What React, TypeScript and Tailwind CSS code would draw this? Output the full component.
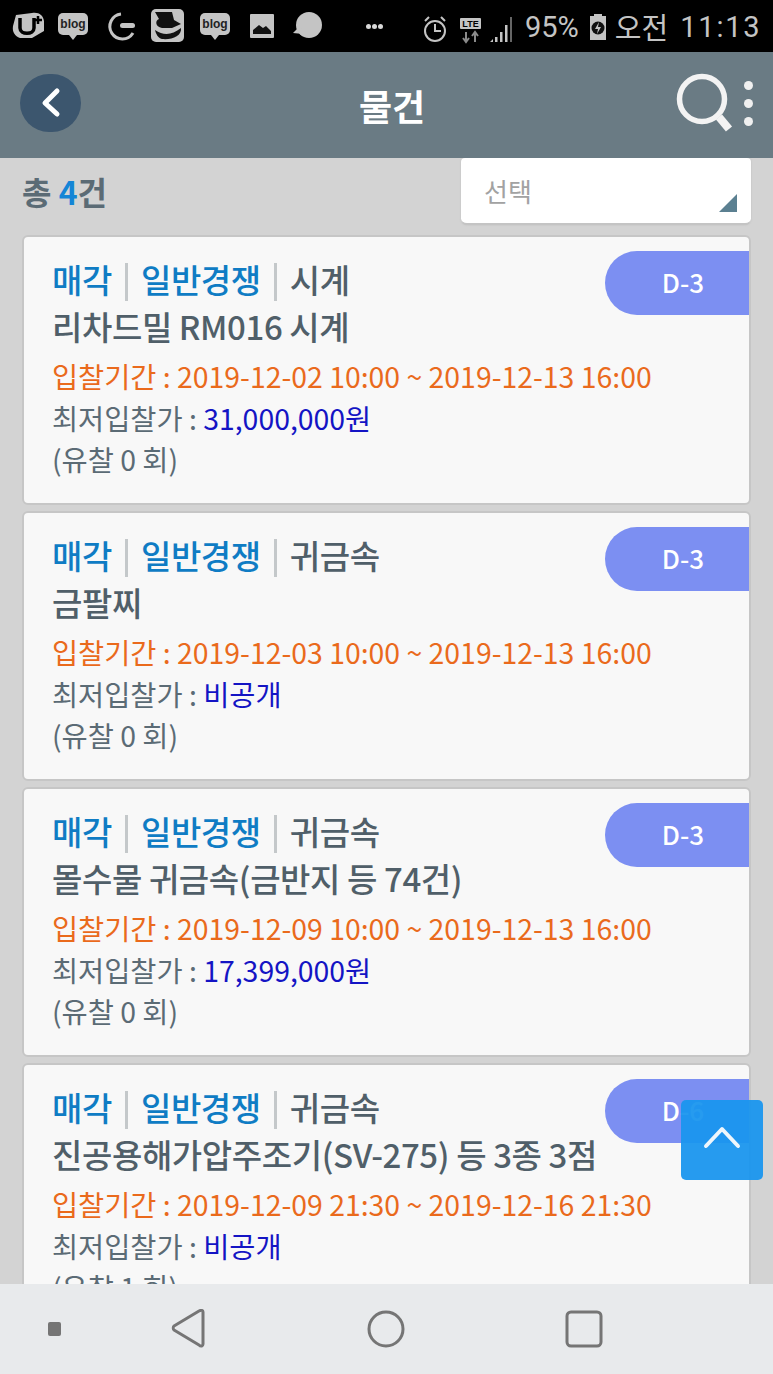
type Item = {
  category: string;
  title: string;
  period: string;
  price: string;
  fails: number;
  dday: string;
};

const items: Item[] = [
  { category: "시계", title: "리차드밀 RM016 시계", period: "2019-12-02 10:00 ~ 2019-12-13 16:00", price: "31,000,000원", fails: 0, dday: "D-3" },
  { category: "귀금속", title: "금팔찌", period: "2019-12-03 10:00 ~ 2019-12-13 16:00", price: "비공개", fails: 0, dday: "D-3" },
  { category: "귀금속", title: "몰수물 귀금속(금반지 등 74건)", period: "2019-12-09 10:00 ~ 2019-12-13 16:00", price: "17,399,000원", fails: 0, dday: "D-3" },
  { category: "귀금속", title: "진공용해가압주조기(SV-275) 등 3종 3점", period: "2019-12-09 21:30 ~ 2019-12-16 21:30", price: "비공개", fails: 1, dday: "D-6" },
];

function StatusBar() {
  return (
    <div className="flex h-[52px] shrink-0 items-center bg-black pl-[12px] text-[#c4c4c4]">
      <svg width="360" height="44" viewBox="0 4 360 44" className="shrink-0">
        {/* notification icons */}
        <path d="M4 15 L20 13 C27 12 31 15 32 21 L32 31 L20 38 L8 38 C3 36 0 32 1 26 Z" fill="#c4c4c4" />
        <path d="M8 18 V28 C8 35 22 35 22 28 V18" fill="none" stroke="#000" strokeWidth="3.5" />
        <path d="M22 20 H30 M26 16 V24" stroke="#000" strokeWidth="2.5" />
        <rect x="46" y="13" width="30" height="22" rx="5" fill="#c4c4c4" />
        <path d="M57 35 L61 40 L65 35 Z" fill="#c4c4c4" />
        <text x="61" y="28" textAnchor="middle" fontSize="12" fontWeight="700" fill="#222" fontFamily="Liberation Sans">blog</text>
        <path d="M109 14 A12.5 12.5 0 1 0 121 33" fill="none" stroke="#c4c4c4" strokeWidth="3" />
        <rect x="108" y="23" width="15" height="5" rx="2.5" fill="#c4c4c4" />
        <rect x="139" y="9" width="33" height="33" rx="5" fill="#c4c4c4" />
        <path d="M143 12 H160 L162 20 L169 24 L160 28 H150 C143 27 143 20 147 19 Z" fill="#111" />
        <path d="M143 30 C152 36 160 35 169 28 C170 36 160 40 150 39 C146 38 144 34 143 30 Z" fill="#111" />
        <rect x="188" y="13" width="30" height="22" rx="5" fill="#c4c4c4" />
        <path d="M199 35 L203 40 L207 35 Z" fill="#c4c4c4" />
        <text x="203" y="28" textAnchor="middle" fontSize="12" fontWeight="700" fill="#222" fontFamily="Liberation Sans">blog</text>
        <rect x="238" y="14" width="24" height="24" rx="1" fill="#c4c4c4" />
        <path d="M241 34 V30 L247 25 L251 28 L254 26 L259 31 V34 Z" fill="#111" />
        <circle cx="297" cy="25" r="13" fill="#c4c4c4" />
        <path d="M281 33 L289 25 L291 34 Z" fill="#c4c4c4" />
      </svg>
      <div className="ml-[-6px] flex shrink-0 gap-[1px]">
        <span className="h-[5px] w-[5px] rounded-full bg-[#d8d8d8]" />
        <span className="h-[5px] w-[5px] rounded-full bg-[#d8d8d8]" />
        <span className="h-[5px] w-[5px] rounded-full bg-[#d8d8d8]" />
      </div>
      <svg width="98" height="44" viewBox="0 0 98 44" className="ml-[39px] shrink-0">
        <circle cx="13" cy="27" r="10" fill="none" stroke="#c4c4c4" strokeWidth="2" />
        <path d="M13 20 V27 H19" fill="none" stroke="#c4c4c4" strokeWidth="2" />
        <path d="M3 17 L7 13 M23 17 L19 13" stroke="#c4c4c4" strokeWidth="2" />
        <rect x="38" y="14" width="21" height="11" rx="1" fill="#c4c4c4" />
        <text x="48.5" y="23" textAnchor="middle" fontSize="9" fontWeight="700" fill="#000" fontFamily="Liberation Sans">LTE</text>
        <path d="M44 28 V37 M41 34 L44 38 L47 34 M53 38 V29 M50 32 L53 28 L56 32" fill="none" stroke="#8a8a8a" strokeWidth="2" />
        <path d="M68 38 L71 35 V38 Z M73 38 V33 H75.5 V38 Z M78 38 V28 H80.5 V38 Z M83 38 V21 H85.5 V38 Z" fill="#c4c4c4" />
        <path d="M88 38 V13 H90 V38 Z" fill="#666" />
      </svg>
      <span className="ml-[5px] mt-[2px] font-['Roboto',sans-serif] text-[29px] leading-none whitespace-nowrap">95%</span>
      <svg width="18" height="28" viewBox="0 0 18 28" className="ml-[10px] mt-[2px] shrink-0">
        <path d="M5 1 H13 V3 H17 V27 H1 V3 H5 Z" fill="#c4c4c4" />
        <circle cx="9" cy="15" r="6.5" fill="#111" />
        <path d="M10 9 L6 16 H9 L8 21 L12 14 H9 Z" fill="#c4c4c4" />
      </svg>
      <span className="ml-[8px] font-['Noto_Sans_CJK_KR',sans-serif] text-[29px] leading-none whitespace-nowrap">오전</span>
      <span className="ml-[12px] mt-[2px] font-['Roboto',sans-serif] text-[29px] leading-none tracking-[1.8px] whitespace-nowrap">11:13</span>
    </div>
  );
}

function Header() {
  return (
    <div className="flex h-[106px] shrink-0 items-center justify-between bg-[#6a7b84] pl-[20px] pr-[20px]">
      <div className="mb-[5px] flex h-[58px] w-[61px] items-center justify-center rounded-full bg-[#3c566e]">
        <svg width="24" height="36" viewBox="0 0 24 36" fill="none">
          <path d="M18 6 L6 18 L18 29" stroke="#fff" strokeWidth="5" strokeLinecap="round" strokeLinejoin="round" />
        </svg>
      </div>
      <h1 className="ml-[28px] text-[36px] font-bold leading-none text-white">물건</h1>
      <div className="mb-[4px] flex items-center gap-[11px]">
        <svg width="58" height="62" viewBox="0 0 58 62" fill="none">
          <circle cx="27" cy="27" r="22.5" stroke="#f3f3f3" strokeWidth="5.5" />
          <path d="M44 45 L54 57" stroke="#f3f3f3" strokeWidth="8" />
        </svg>
        <div className="flex flex-col gap-[9px]">
          <span className="h-[9px] w-[9px] rounded-full bg-[#f0f0f0]" />
          <span className="h-[9px] w-[9px] rounded-full bg-[#f0f0f0]" />
          <span className="h-[9px] w-[9px] rounded-full bg-[#f0f0f0]" />
        </div>
      </div>
    </div>
  );
}

function ItemCard({ item }: { item: Item }) {
  return (
    <div className="relative h-[270px] shrink-0 rounded-[6px] border-2 border-[#c6c6c6] bg-[#f8f8f8] pl-[28px] pt-[18px] text-[#5b6b75]">
      <div className="flex h-[48px] items-center text-[33px] font-medium leading-none tracking-[-0.4px]">
        <span className="text-[#0f7cc4]">매각</span>
        <span className="mx-[13px] mt-[6px] h-[38px] w-[3px] bg-[#c4c8ca]" />
        <span className="text-[#0f7cc4]">일반경쟁</span>
        <span className="mx-[13px] mt-[6px] h-[38px] w-[3px] bg-[#c4c8ca]" />
        <span className="text-[#505f69]">{item.category}</span>
      </div>
      <div className="flex h-[47px] items-center text-[33px] font-medium leading-none tracking-[-0.4px] text-[#505f69]">{item.title}</div>
      <div className="mt-[5px] flex h-[42px] items-center whitespace-nowrap text-[28.4px] leading-none text-[#ea6a1c]">
        입찰기간 : {item.period}
      </div>
      <div className="flex h-[42px] items-center whitespace-nowrap text-[28.4px] leading-none">
        최저입찰가 :&nbsp;<span className="text-[#1414c4]">{item.price}</span>
      </div>
      <div className="flex h-[41px] items-center whitespace-nowrap text-[28.4px] leading-none">(유찰 {item.fails} 회)</div>
      <div className="absolute right-0 top-[14px] flex h-[64px] w-[144px] items-center justify-center rounded-l-[32px] bg-[#7c8ff2] pb-[3px] pl-[12px] text-[26px] font-medium leading-none text-white">
        {item.dday}
      </div>
    </div>
  );
}

function NavBar() {
  return (
    <div className="flex h-[90px] shrink-0 items-center bg-[#e8eaec] pl-[48px]">
      <span className="h-[14px] w-[13px] rounded-[2px] bg-[#757575]" />
      <svg width="36" height="40" viewBox="0 0 36 40" fill="none" className="ml-[110px] shrink-0">
        <path d="M32 3 V35 C32 37 30 38 28 36 L3 21 C2 20 2 18 3 17 L28 2 C30 1 32 1 32 3 Z" stroke="#757575" strokeWidth="3" strokeLinejoin="round" />
      </svg>
      <svg width="38" height="38" viewBox="0 0 38 38" fill="none" className="ml-[160px] shrink-0">
        <circle cx="19" cy="19" r="17" stroke="#757575" strokeWidth="3" />
      </svg>
      <svg width="38" height="38" viewBox="0 0 38 38" fill="none" className="ml-[160px] shrink-0">
        <rect x="2" y="2" width="34" height="34" rx="4" stroke="#757575" strokeWidth="3" />
      </svg>
    </div>
  );
}

export default function App() {
  return (
    <div className="relative flex h-[1374px] w-[773px] flex-col overflow-hidden bg-[#d3d3d3] font-['Noto_Sans_CJK_KR','Noto_Sans',sans-serif]">
      <StatusBar />
      <Header />
      <div className="flex min-h-0 flex-1 flex-col overflow-hidden px-[22px]">
        <div className="flex h-[77px] shrink-0 items-start justify-between">
          <div className="pt-[13px] text-[32px] font-bold leading-[40px] text-[#5b6b75]">
            총 <span className="text-[#1485d6]">4</span>건
          </div>
          <div className="relative h-[67px] w-[290px] rounded-b-[6px] rounded-t-[4px] border-b-2 border-[#c4c4c4] bg-white pl-[23px] pt-[15px] text-[26px] leading-[36px] text-[#a2a2a2] shadow-[0_0_2px_#bbb]">
            선택
            <svg width="18" height="18" viewBox="0 0 18 18" className="absolute bottom-[11px] right-[14px]">
              <path d="M18 0 V18 H0 Z" fill="#5b8091" />
            </svg>
          </div>
        </div>
        <div className="flex flex-col gap-[6px]">
          {items.map((item) => (
            <ItemCard key={item.title} item={item} />
          ))}
        </div>
      </div>
      <NavBar />
      <button className="absolute left-[681px] top-[1100px] flex h-[80px] w-[82px] items-center justify-center rounded-[5px] bg-[#1a96ee]/95 pb-[6px]">
        <svg width="38" height="24" viewBox="0 0 38 24" fill="none">
          <path d="M3 21 L19 4 L35 21" stroke="#eef6fc" strokeWidth="4" strokeLinecap="round" strokeLinejoin="round" />
        </svg>
      </button>
    </div>
  );
}
